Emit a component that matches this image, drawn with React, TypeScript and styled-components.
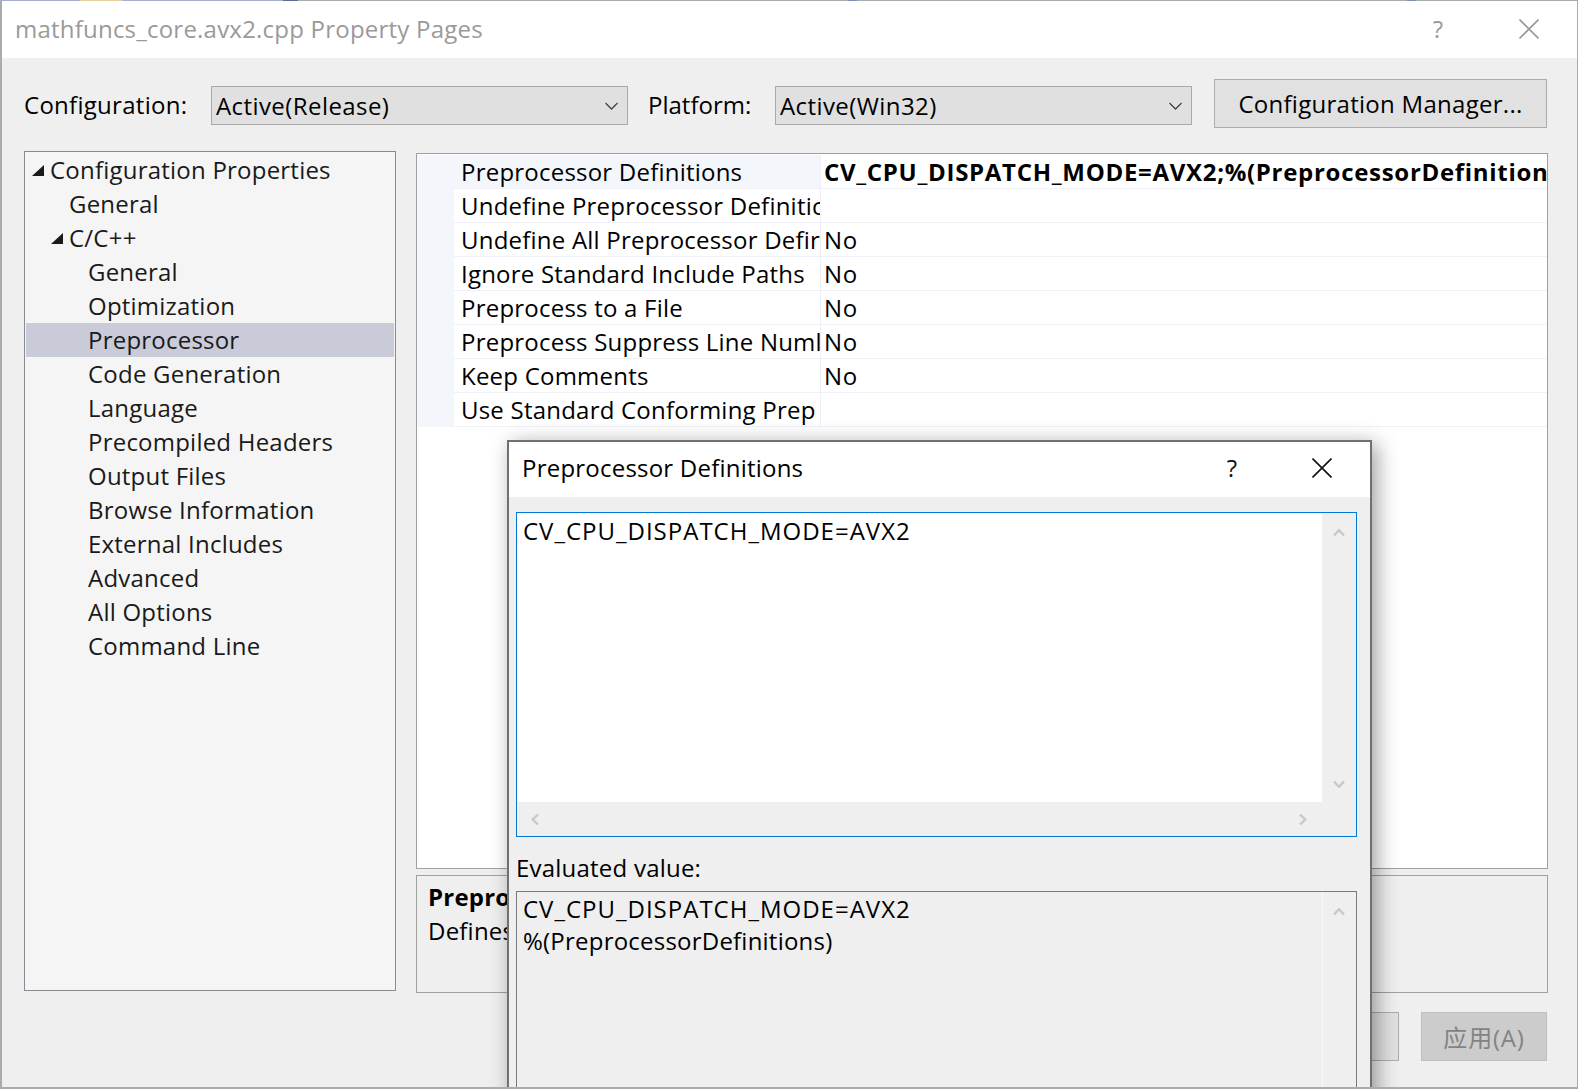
import React from "react";
import styled, { createGlobalStyle } from "styled-components";

const GlobalStyle = createGlobalStyle`
  html, body {
    margin: 0;
    height: 100%;
    overflow: hidden;
    background: #a9abb2;
  }
  body {
    /* one pixel of the desktop shows above the window */
    background: linear-gradient(
        to right,
        #a8aec8 0 80px,
        #e8cf9e 80px 122px,
        #a8aec8 122px 283px,
        #5f6a94 283px 298px,
        #a9abb2 298px 848px,
        #7f8fb0 848px 857px,
        #a9abb2 857px 1407px,
        #7f8fb0 1407px 1416px,
        #a9abb2 1416px
      )
      top / 100% 1px no-repeat #a9abb2;
    font-family: "Open Sans", "Noto Sans", "Noto Sans CJK SC", sans-serif;
    font-size: 24px;
    color: #000;
    letter-spacing: 0.22px;
  }
`;

const Window = styled.div`
  position: relative;
  box-sizing: border-box;
  width: 1575px;
  height: 1086px;
  margin: 1px 0 0 2px;
  background: #efefef;
  overflow: hidden;
`;

const TitleBar = styled.div`
  display: flex;
  align-items: center;
  box-sizing: border-box;
  height: 57px;
  padding: 0 0 2px 13px;
  background: #fff;
  color: #9a9a9a;
`;

const TitleText = styled.div`
  flex: 1;
`;

const HelpMark = styled.div<{ $dark?: boolean }>`
  width: 24px;
  text-align: center;
  color: ${({ $dark }) => ($dark ? "#111" : "#9a9a9a")};
`;

const CloseIcon = styled.svg`
  display: block;
  width: 20px;
  height: 20px;
  fill: none;
  stroke: currentColor;
  stroke-width: 1.6;
`;

const CloseBox = styled.div<{ $gap: number; $right: number; $dark?: boolean }>`
  margin: 0 ${({ $right }) => $right}px 0 ${({ $gap }) => $gap}px;
  color: ${({ $dark }) => ($dark ? "#111" : "#9a9a9a")};
`;

const ConfigRow = styled.div`
  display: flex;
  align-items: center;
  height: 49px;
  margin-top: 21px;
  padding-left: 22px;
`;

const ConfigLabel = styled.div<{ $width: number; $inset?: number; $tight?: boolean }>`
  box-sizing: border-box;
  width: ${({ $width }) => $width}px;
  padding: 2px 0 0 ${({ $inset }) => $inset || 0}px;
  letter-spacing: ${({ $tight }) => ($tight ? "0" : "0.28px")};
`;

const Combo = styled.div`
  display: flex;
  align-items: center;
  justify-content: space-between;
  box-sizing: border-box;
  width: 417px;
  height: 39px;
  margin-top: 4px;
  padding: 0 9px 0 4px;
  background: #e0e0e0;
  border: 1px solid #a9a9a9;
  letter-spacing: 0.42px;
`;

const ComboArrow = styled.svg`
  display: block;
  width: 13px;
  height: 8px;
  fill: none;
  stroke: #444;
  stroke-width: 1.3;
`;

const PushButton = styled.div<{ $width: number; $disabled?: boolean }>`
  display: flex;
  align-items: center;
  justify-content: center;
  box-sizing: border-box;
  width: ${({ $width }) => $width}px;
  height: 49px;
  background: ${({ $disabled }) => ($disabled ? "#cccccc" : "#e1e1e1")};
  border: 1px solid ${({ $disabled }) => ($disabled ? "#bfbfbf" : "#adadad")};
  color: ${({ $disabled }) => ($disabled ? "#838383" : "#000")};
  letter-spacing: ${({ $disabled }) => ($disabled ? "0.8px" : "0.28px")};
`;

const ManagerSlot = styled.div`
  margin-left: 22px;
`;

const MainRow = styled.div`
  display: flex;
  align-items: flex-start;
  gap: 20px;
  margin-top: 23px;
  padding-left: 22px;
`;

const Tree = styled.div`
  box-sizing: border-box;
  width: 372px;
  height: 840px;
  padding: 1px;
  background: #f5f5f5;
  border: 1px solid #868b92;
`;

const TreeRow = styled.div<{ $level: number; $selected?: boolean }>`
  position: relative;
  height: 34px;
  line-height: 33px;
  padding-left: ${({ $level }) => 24 + $level * 19}px;
  background: ${({ $selected }) => ($selected ? "#c9cbd9" : "transparent")};
  color: #1a1a1a;
`;

const Expander = styled.svg<{ $level: number }>`
  position: absolute;
  top: 12px;
  left: ${({ $level }) => 6 + $level * 19}px;
  width: 12px;
  height: 11px;
  fill: #1a1a1a;
`;

const RightColumn = styled.div`
  display: flex;
  flex-direction: column;
  width: 1132px;
  margin-top: 2px;
`;

const GridPanel = styled.div`
  box-sizing: border-box;
  height: 716px;
  padding-top: 1px;
  background: #fff;
  border: 1px solid #a0a0a0;
`;

const GridRow = styled.div`
  display: grid;
  grid-template-columns: 37px 366px 1fr;
  height: 34px;
  line-height: 33px;
  overflow: hidden;
`;

const Gutter = styled.div`
  background: #f3f6fb;
`;

const NameCell = styled.div<{ $active?: boolean }>`
  box-sizing: border-box;
  padding-left: 7px;
  white-space: nowrap;
  overflow: hidden;
  background: ${({ $active }) => ($active ? "#f3f6fb" : "#fff")};
  border-bottom: 1px solid #f0f0f8;
`;

const ValueCell = styled.div<{ $bold?: boolean }>`
  box-sizing: border-box;
  padding-left: 3px;
  white-space: nowrap;
  overflow: hidden;
  font-weight: ${({ $bold }) => ($bold ? 700 : 400)};
  letter-spacing: ${({ $bold }) => ($bold ? "0.7px" : "0.8px")};
  border-bottom: 1px solid #f0f0f8;
  border-left: 1px solid #f0f0f8;
`;

const DescPanel = styled.div`
  box-sizing: border-box;
  height: 118px;
  margin-top: 6px;
  padding: 4px 11px;
  border: 1px solid #a0a0a0;
  line-height: 34px;
  white-space: nowrap;
  overflow: hidden;
`;

const DescTitle = styled.div`
  font-weight: 700;
`;

const Footer = styled.div`
  display: flex;
  justify-content: flex-end;
  gap: 22px;
  margin-top: 19px;
  padding-right: 1px;
`;

const Dialog = styled.div`
  position: absolute;
  top: 439px;
  left: 505px;
  box-sizing: border-box;
  width: 865px;
  height: 700px;
  background: #efefef;
  border: 2px solid #707070;
  box-shadow: 5px 4px 20px rgba(0, 0, 0, 0.38);
`;

const DialogTitle = styled.div`
  display: flex;
  align-items: center;
  box-sizing: border-box;
  height: 55px;
  padding: 0 0 4px 13px;
  background: #fff;
`;

const DialogBody = styled.div`
  padding: 15px 7px 0;
`;

const ScrollBox = styled.div<{ $focused?: boolean; $height: number }>`
  display: grid;
  grid-template-columns: 1fr 34px;
  grid-template-rows: 1fr ${({ $focused }) => ($focused ? "34px" : "0")};
  box-sizing: border-box;
  width: 841px;
  height: ${({ $height }) => $height}px;
  border: 1px solid ${({ $focused }) => ($focused ? "#0078d7" : "#7a7a7a")};
`;

const BoxText = styled.div<{ $focused?: boolean }>`
  padding: ${({ $focused }) => ($focused ? "2px" : "1px")} 6px 0;
  line-height: 32px;
  background: ${({ $focused }) => ($focused ? "#fff" : "#efefef")};
  white-space: nowrap;
`;

const MacroLine = styled.span`
  letter-spacing: 1px;
`;

const VScroll = styled.div<{ $divided?: boolean }>`
  display: flex;
  flex-direction: column;
  align-items: center;
  justify-content: space-between;
  padding: 15px ${({ $divided }) => ($divided ? "1px" : "0")} 13px 0;
  ${({ $divided }) => ($divided ? "border-left: 1px solid #f8f8f8;" : "")}
`;

const HScroll = styled.div`
  display: flex;
  align-items: center;
  justify-content: space-between;
  padding: 0 13px 0 12px;
`;

const ScrollCorner = styled.div`
  background: #efefef;
`;

const ScrollArrow = styled.svg<{ $turn: number }>`
  display: block;
  width: 12px;
  height: 9px;
  fill: none;
  stroke: #c8c8c8;
  stroke-width: 2.4;
  transform: rotate(${({ $turn }) => $turn}deg);
`;

const FieldLabel = styled.div`
  display: flex;
  align-items: center;
  box-sizing: border-box;
  height: 54px;
  padding-top: 7px;
`;

const treeItems = [
  { label: "Configuration Properties", level: 0, open: true },
  { label: "General", level: 1 },
  { label: "C/C++", level: 1, open: true },
  { label: "General", level: 2 },
  { label: "Optimization", level: 2 },
  { label: "Preprocessor", level: 2, selected: true },
  { label: "Code Generation", level: 2 },
  { label: "Language", level: 2 },
  { label: "Precompiled Headers", level: 2 },
  { label: "Output Files", level: 2 },
  { label: "Browse Information", level: 2 },
  { label: "External Includes", level: 2 },
  { label: "Advanced", level: 2 },
  { label: "All Options", level: 2 },
  { label: "Command Line", level: 2 },
];

// names are cut where the column cuts them in the dialog
const properties = [
  { name: "Preprocessor Definitions", value: "CV_CPU_DISPATCH_MODE=AVX2;%(PreprocessorDefinition", active: true },
  { name: "Undefine Preprocessor Definitic", value: "" },
  { name: "Undefine All Preprocessor Defir", value: "No" },
  { name: "Ignore Standard Include Paths", value: "No" },
  { name: "Preprocess to a File", value: "No" },
  { name: "Preprocess Suppress Line Numl", value: "No" },
  { name: "Keep Comments", value: "No" },
  { name: "Use Standard Conforming Prep", value: "" },
];

const Close = (props: { gap: number; right: number; dark?: boolean }) => (
  <CloseBox $gap={props.gap} $right={props.right} $dark={props.dark}>
    <CloseIcon viewBox="0 0 20 20">
      <path d="M0.5 0.5L19.5 19.5M19.5 0.5L0.5 19.5" />
    </CloseIcon>
  </CloseBox>
);

// points up at 0deg, the other directions are rotations of it
const Arrow = ({ turn }: { turn: number }) => (
  <ScrollArrow $turn={turn} viewBox="0 0 12 9">
    <path d="M1 7.5L6 2.2L11 7.5" />
  </ScrollArrow>
);

const ComboBox = ({ value }: { value: string }) => (
  <Combo>
    {value}
    <ComboArrow viewBox="0 0 13 8">
      <path d="M0.5 1L6.5 7L12.5 1" />
    </ComboArrow>
  </Combo>
);

const App = () => {
  return (
    <>
      <GlobalStyle />
      <Window>
        <TitleBar>
          <TitleText>mathfuncs_core.avx2.cpp Property Pages</TitleText>
          <HelpMark>?</HelpMark>
          <Close gap={69} right={38} />
        </TitleBar>
        <ConfigRow>
          <ConfigLabel $width={187}>Configuration:</ConfigLabel>
          <ComboBox value="Active(Release)" />
          <ConfigLabel $width={147} $inset={20} $tight>
            Platform:
          </ConfigLabel>
          <ComboBox value="Active(Win32)" />
          <ManagerSlot>
            <PushButton $width={333}>Configuration Manager...</PushButton>
          </ManagerSlot>
        </ConfigRow>
        <MainRow>
          <Tree>
            {treeItems.map((item, i) => (
              <TreeRow key={i} $level={item.level} $selected={item.selected}>
                {item.open && (
                  <Expander $level={item.level} viewBox="0 0 12 11">
                    <path d="M12 0V11H0Z" />
                  </Expander>
                )}
                {item.label}
              </TreeRow>
            ))}
          </Tree>
          <RightColumn>
            <GridPanel>
              {properties.map((prop) => (
                <GridRow key={prop.name}>
                  <Gutter />
                  <NameCell $active={prop.active}>{prop.name}</NameCell>
                  <ValueCell $bold={prop.active}>{prop.value}</ValueCell>
                </GridRow>
              ))}
            </GridPanel>
            <DescPanel>
              <DescTitle>Prepro</DescTitle>
              Defines
            </DescPanel>
            <Footer>
              <PushButton $width={126} />
              <PushButton $width={126} $disabled>
                应用(A)
              </PushButton>
            </Footer>
          </RightColumn>
        </MainRow>
        <Dialog>
          <DialogTitle>
            <TitleText>Preprocessor Definitions</TitleText>
            <HelpMark $dark>?</HelpMark>
            <Close gap={68} right={38} dark />
          </DialogTitle>
          <DialogBody>
            <ScrollBox $focused $height={325}>
              <BoxText $focused>
                <MacroLine>CV_CPU_DISPATCH_MODE=AVX2</MacroLine>
              </BoxText>
              <VScroll>
                <Arrow turn={0} />
                <Arrow turn={180} />
              </VScroll>
              <HScroll>
                <Arrow turn={270} />
                <Arrow turn={90} />
              </HScroll>
              <ScrollCorner />
            </ScrollBox>
            <FieldLabel>Evaluated value:</FieldLabel>
            <ScrollBox $height={400}>
              <BoxText>
                <MacroLine>CV_CPU_DISPATCH_MODE=AVX2</MacroLine>
                <br />
                %(PreprocessorDefinitions)
              </BoxText>
              <VScroll $divided>
                <Arrow turn={0} />
              </VScroll>
            </ScrollBox>
          </DialogBody>
        </Dialog>
      </Window>
    </>
  );
};

export default App;
